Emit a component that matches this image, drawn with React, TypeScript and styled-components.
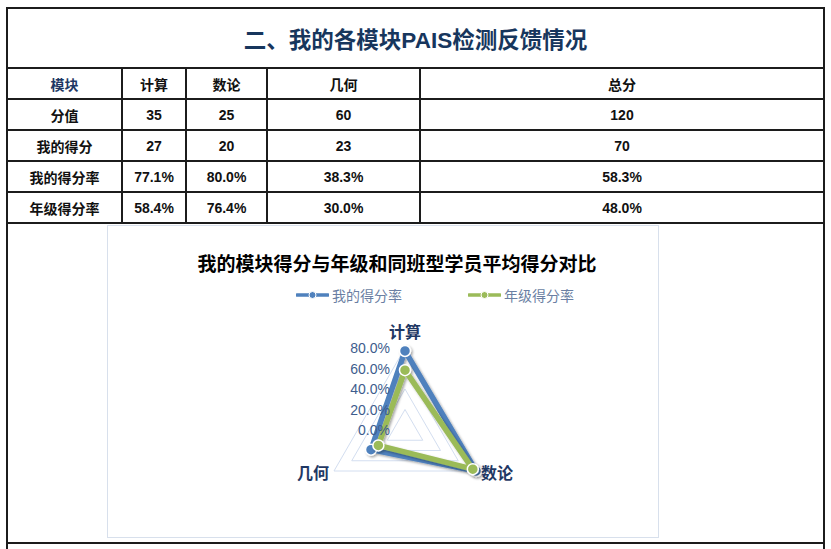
import React from "react";
import styled, { createGlobalStyle } from "styled-components";

const Global = createGlobalStyle`
  html, body { margin: 0; padding: 0; background: #fff; overflow: hidden; }
  body { font-family: "Liberation Sans", "Noto Sans CJK SC", sans-serif; }
`;

const Sheet = styled.div`
  margin: 7px 0 0 6px;
  width: 819px;
  box-sizing: border-box;
  border: 2px solid #1c1c1c;
  border-bottom: none;
  background: #1c1c1c;
  display: grid;
  grid-template-columns: 113px 62px 79px 151px 402px;
  grid-template-rows: 58px repeat(5, 29px) 318px 30px;
  gap: 2px;
`;

const TitleCell = styled.div`
  grid-column: 1 / -1;
  background: #fff;
  display: flex;
  align-items: center;
  justify-content: center;
  font-family: "Liberation Sans", "Noto Sans CJK SC", sans-serif;
  font-weight: 700;
  font-size: 22.5px;
  color: #17365d;
`;

const Cell = styled.div<{ $head?: boolean }>`
  background: #fff;
  display: flex;
  align-items: center;
  justify-content: center;
  font-family: "Liberation Sans", "Noto Sans CJK SC", sans-serif;
  font-weight: 700;
  font-size: 14px;
  color: ${(p) => (p.$head ? "#1f3864" : "#111")};
`;

const ChartRow = styled.div`
  grid-column: 1 / -1;
  background: #fff;
  box-sizing: border-box;
  padding: 1px 0 0 99px;
`;

const TailRow = styled.div`
  grid-column: 1 / -1;
  background: #fff;
`;

const ChartBox = styled.div`
  width: 552px;
  height: 313px;
  box-sizing: border-box;
  border: 1px solid #d8e0ec;
  display: flex;
  flex-direction: column;
`;

const ChartTitle = styled.div`
  padding: 25px 0 0 28px;
  height: 24px;
  line-height: 24px;
  text-align: center;
  font-family: "Noto Sans CJK SC", sans-serif;
  font-weight: 700;
  font-size: 19px;
  color: #000;
`;

const Legend = styled.div`
  margin-top: 10px;
  height: 20px;
  display: flex;
  align-items: center;
  padding-left: 188px;
  gap: 66px;
`;

const LegendItem = styled.div`
  display: flex;
  align-items: center;
  gap: 3px;
  font-family: "Noto Sans CJK SC", sans-serif;
  font-size: 14px;
  color: #6b7fa3;
`;

const Radar = styled.svg`
  display: block;
  flex: none;
`;

const rows: { head?: boolean; cells: string[] }[] = [
  { head: true, cells: ["模块", "计算", "数论", "几何", "总分"] },
  { cells: ["分值", "35", "25", "60", "120"] },
  { cells: ["我的得分", "27", "20", "23", "70"] },
  { cells: ["我的得分率", "77.1%", "80.0%", "38.3%", "58.3%"] },
  { cells: ["年级得分率", "58.4%", "76.4%", "30.0%", "48.0%"] },
];

const CX = 297;
const CY = 125;
const R80 = 82;

function pts(values: number[]) {
  const angles = [-90, 30, 150];
  return values.map((v, i) => {
    const r = (v / 80) * R80;
    const a = (angles[i] * Math.PI) / 180;
    return [CX + r * Math.cos(a), CY + r * Math.sin(a)] as [number, number];
  });
}

function LegendSwatch({ color }: { color: string }) {
  return (
    <svg width="33" height="8" viewBox="0 0 33 8">
      <line x1="1" y1="4" x2="32" y2="4" stroke={color} strokeWidth="3.5" strokeLinecap="round" />
      <circle cx="16.5" cy="4" r="3.5" fill={color} stroke="#fff" strokeWidth="1" />
    </svg>
  );
}

export default function App() {
  const rings = [20, 40, 60, 80].map((v) => pts([v, v, v]));
  const blue = pts([77.1, 80.0, 38.3]);
  const green = pts([58.4, 76.4, 30.0]);
  const toStr = (p: [number, number][]) => p.map((q) => q.join(",")).join(" ");
  const ticks = ["0.0%", "20.0%", "40.0%", "60.0%", "80.0%"];

  return (
    <>
      <Global />
      <Sheet>
        <TitleCell>二、我的各模块PAIS检测反馈情况</TitleCell>
        {rows.map((r, ri) =>
          r.cells.map((c, ci) => (
            <Cell key={`${ri}-${ci}`} $head={r.head && ci === 0}>
              {c}
            </Cell>
          ))
        )}
        <ChartRow>
          <ChartBox>
            <ChartTitle>我的模块得分与年级和同班型学员平均得分对比</ChartTitle>
            <Legend>
              <LegendItem>
                <LegendSwatch color="#4f81bd" />
                我的得分率
              </LegendItem>
              <LegendItem>
                <LegendSwatch color="#9bbb59" />
                年级得分率
              </LegendItem>
            </Legend>
            <Radar width={550} height={232} viewBox="0 0 550 232">
              <defs>
                <filter id="sh" x="-20%" y="-20%" width="140%" height="140%">
                  <feDropShadow dx="1.5" dy="1.5" stdDeviation="1.2" floodColor="#000" floodOpacity="0.35" />
                </filter>
              </defs>
              {rings.map((p, i) => (
                <polygon key={i} points={toStr(p)} fill="none" stroke="#d3def0" strokeWidth="1" />
              ))}
              <g filter="url(#sh)">
                <polygon points={toStr(blue)} fill="none" stroke="#4f81bd" strokeWidth="5.5" strokeLinejoin="round" />
                {blue.map(([x, y], i) => (
                  <circle key={i} cx={x} cy={y} r="5.5" fill="#4f81bd" stroke="#fff" strokeWidth="1.5" />
                ))}
              </g>
              <g filter="url(#sh)">
                <polygon points={toStr(green)} fill="none" stroke="#9bbb59" strokeWidth="5.5" strokeLinejoin="round" />
                {green.map(([x, y], i) => (
                  <circle key={i} cx={x} cy={y} r="5.5" fill="#9bbb59" stroke="#fff" strokeWidth="1.5" />
                ))}
              </g>
              {ticks.map((t, i) => (
                <text
                  key={t}
                  x={282}
                  y={CY - i * 20.5 + 5}
                  textAnchor="end"
                  fontFamily="'Liberation Sans', sans-serif"
                  fontSize="14"
                  fill="#3e5d8d"
                >
                  {t}
                </text>
              ))}
              <text x={297} y={33} textAnchor="middle" fontFamily="'Noto Sans CJK SC', sans-serif" fontWeight="700" fontSize="16" fill="#1f3864">
                计算
              </text>
              <text x={205} y={174} textAnchor="middle" fontFamily="'Noto Sans CJK SC', sans-serif" fontWeight="700" fontSize="16" fill="#1f3864">
                几何
              </text>
              <text x={389} y={174} textAnchor="middle" fontFamily="'Noto Sans CJK SC', sans-serif" fontWeight="700" fontSize="16" fill="#1f3864">
                数论
              </text>
            </Radar>
          </ChartBox>
        </ChartRow>
        <TailRow />
      </Sheet>
    </>
  );
}
